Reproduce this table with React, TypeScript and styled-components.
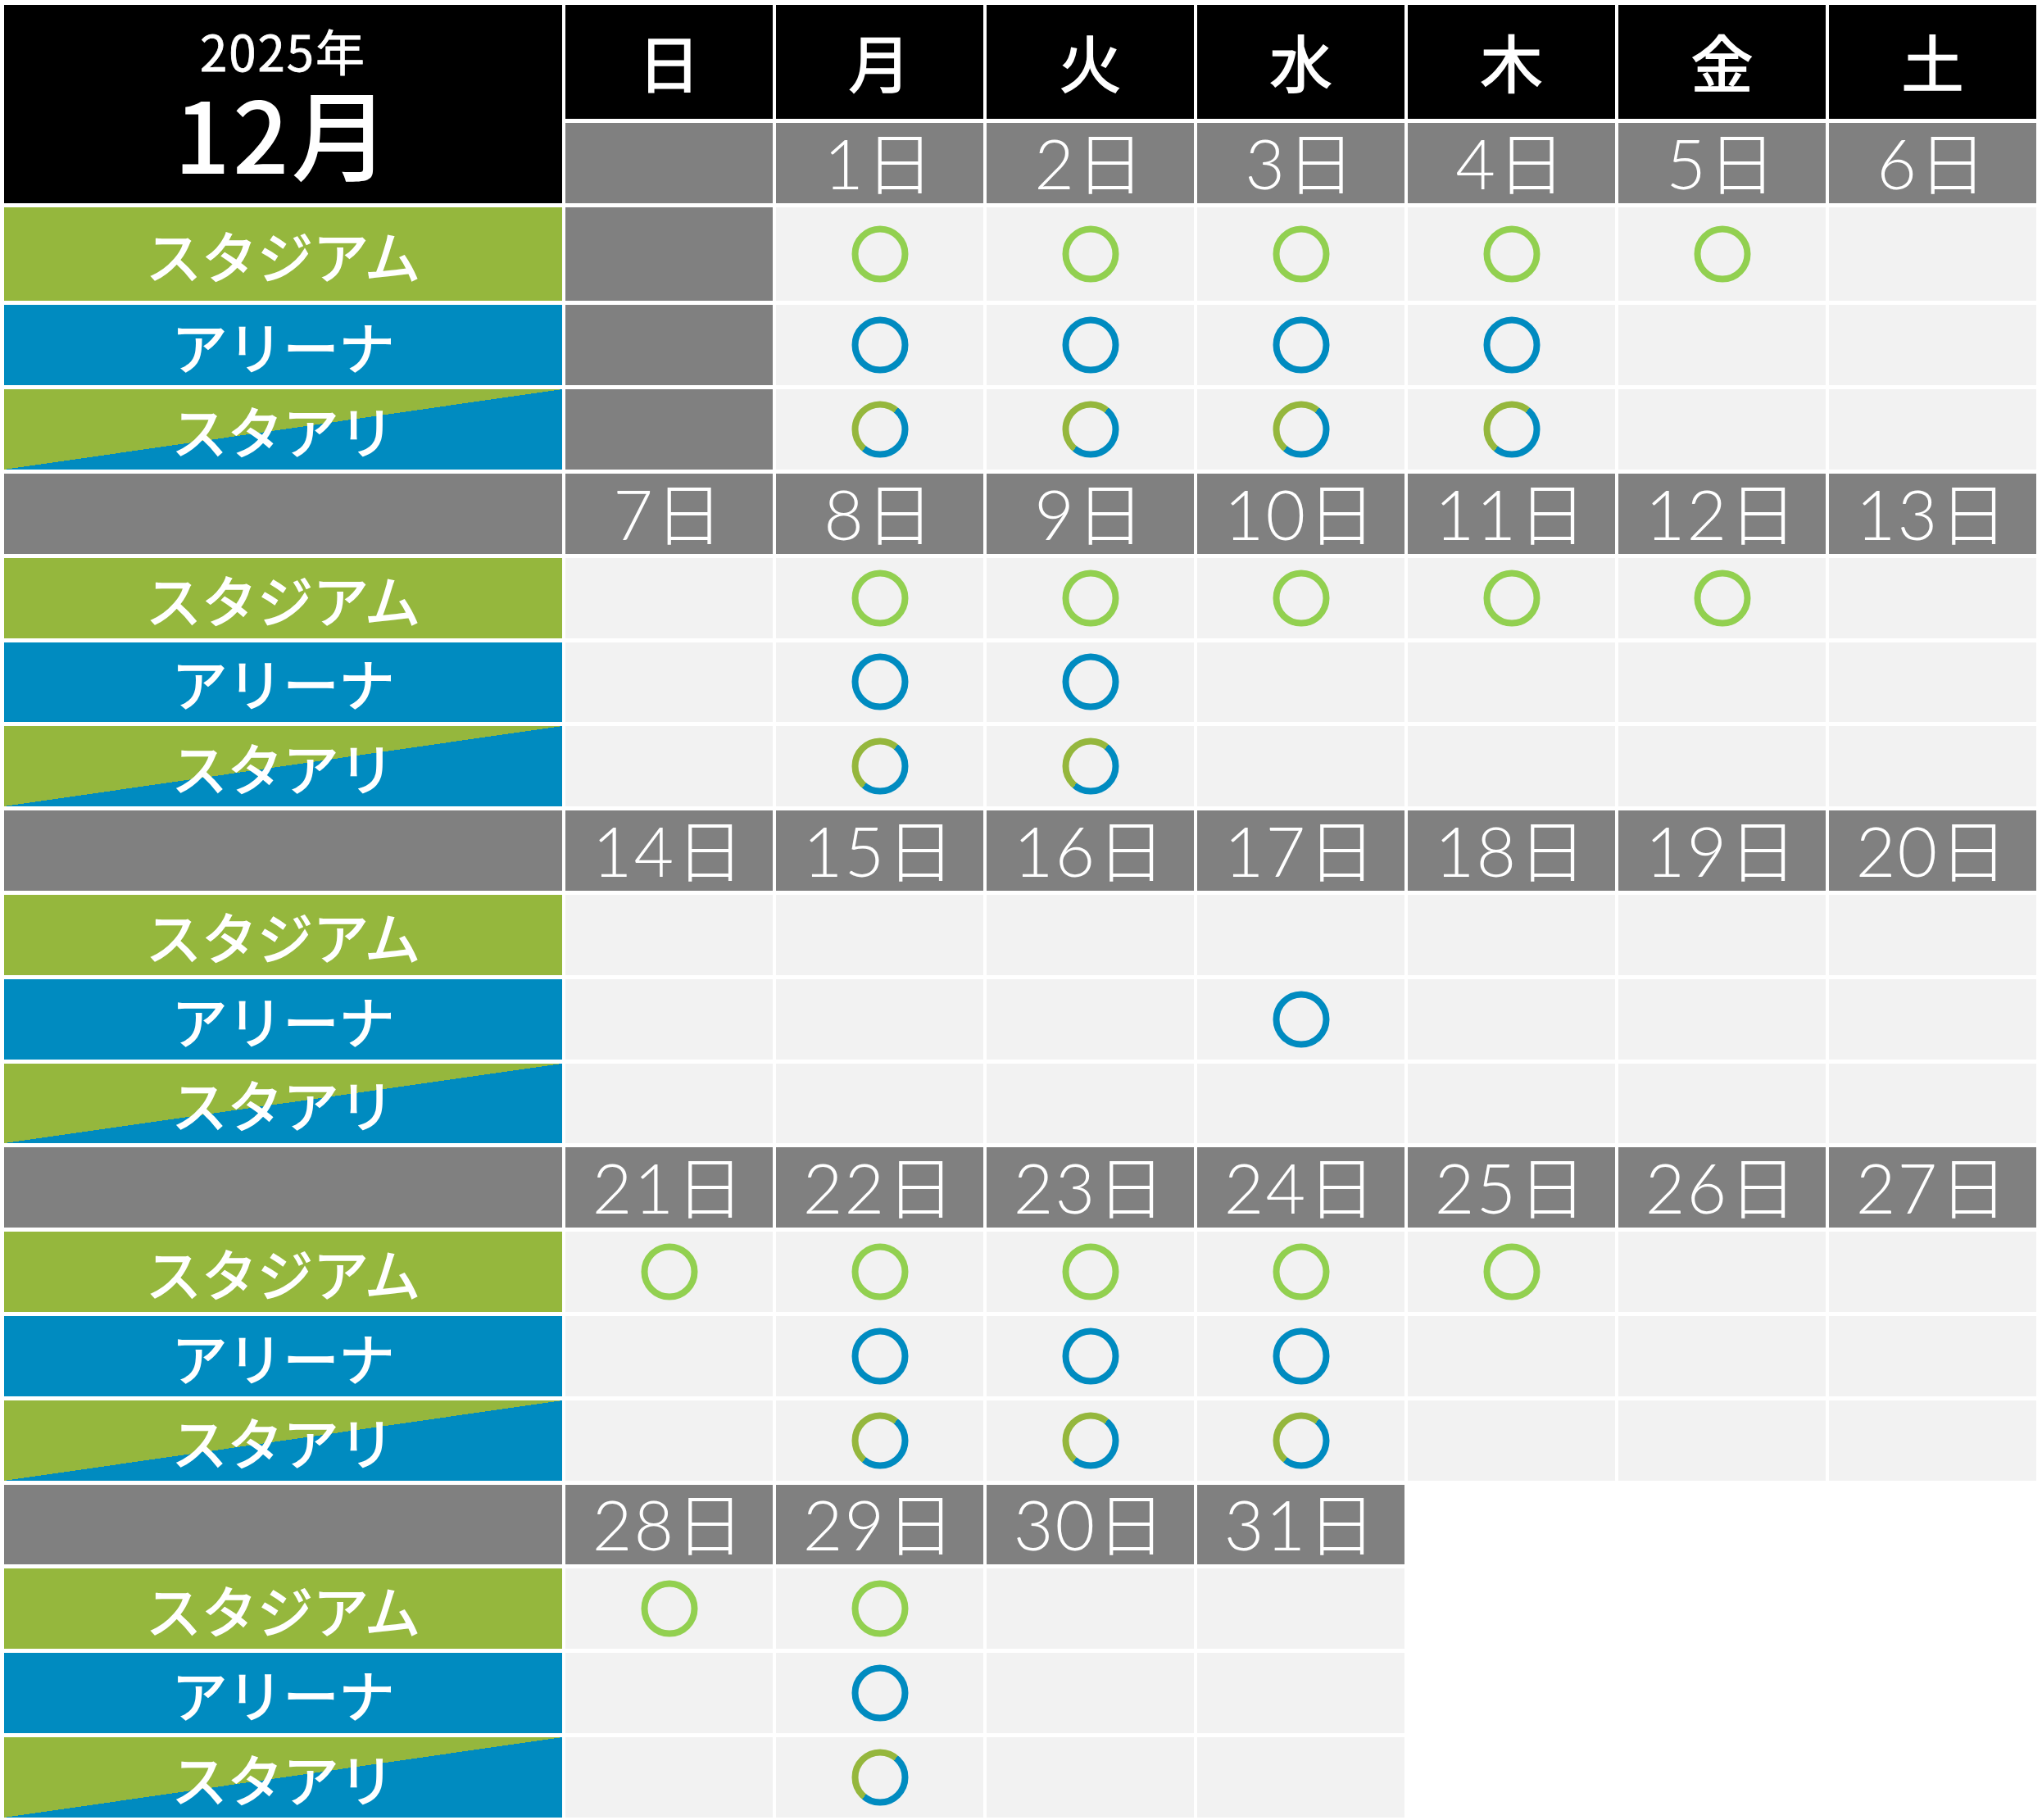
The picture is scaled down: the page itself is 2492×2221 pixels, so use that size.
import React from "react";
import styled, { createGlobalStyle } from "styled-components";

const GREEN = "#95b73d";
const LIME = "#92d050";
const BLUE = "#008bc0";
const GRAY = "#808080";
const LIGHT = "#f2f2f2";

type VenueKey = "stadium" | "arena" | "both";
type SlotKind = "pad" | "on" | "off";

const venues: { key: VenueKey; label: string }[] = [
  { key: "stadium", label: "スタジアム" },
  { key: "arena", label: "アリーナ" },
  { key: "both", label: "スタアリ" },
];

const openDays: Record<VenueKey, number[]> = {
  stadium: [1, 2, 3, 4, 5, 8, 9, 10, 11, 12, 21, 22, 23, 24, 25, 28, 29],
  arena: [1, 2, 3, 4, 8, 9, 17, 22, 23, 24, 29],
  both: [1, 2, 3, 4, 8, 9, 22, 23, 24, 29],
};

const weekdays = ["日", "月", "火", "水", "木", "金", "土"];

// 2025/12/1 is a Monday
const FIRST_OFFSET = 1;
const DAYS_IN_MONTH = 31;

function buildWeeks(): number[][] {
  const weeks: number[][] = [];
  let day = 1 - FIRST_OFFSET;
  while (day <= DAYS_IN_MONTH) {
    const week: number[] = [];
    for (let i = 0; i < 7; i++) {
      week.push(day);
      day++;
    }
    weeks.push(week);
  }
  return weeks;
}

function kindOf(day: number): SlotKind {
  if (day < 1) return "pad";
  if (day > DAYS_IN_MONTH) return "off";
  return "on";
}

const GlobalStyle = createGlobalStyle`
  html, body {
    margin: 0;
    padding: 0;
    background: #ffffff;
  }
  body {
    font-family: "Noto Sans CJK JP", "Noto Sans", sans-serif;
  }
`;

const Calendar = styled.div`
  display: grid;
  grid-template-columns: 681px repeat(7, 253px);
  grid-template-rows: 139px 98px 114px 98px 98px repeat(16, 97.8px);
  column-gap: 4px;
  row-gap: 5px;
  padding: 6px 0 0 5px;
  width: max-content;
`;

const Cell = styled.div`
  display: flex;
  align-items: center;
  justify-content: center;
  line-height: 1;
  color: #ffffff;
  white-space: nowrap;
`;

const MonthCell = styled(Cell)`
  grid-row: span 2;
  flex-direction: column;
  background: #000000;
`;

const Year = styled.span`
  font-size: 60px;
  font-weight: 400;
  letter-spacing: 2px;
  line-height: 1.1;
  -webkit-text-stroke: 0.8px #ffffff;
`;

const Month = styled.span`
  font-size: 120px;
  font-weight: 500;
  letter-spacing: 3px;
  line-height: 1.1;
`;

const DayName = styled(Cell)`
  background: #000000;
  font-size: 76px;
  font-weight: 400;
  -webkit-text-stroke: 1.6px #ffffff;
  padding-bottom: 4px;
`;

const DateCell = styled(Cell)<{ $kind: SlotKind }>`
  background: ${(p) => (p.$kind === "off" ? "transparent" : GRAY)};
  font-family: Lato, "Noto Sans CJK JP", sans-serif;
  font-size: 84px;
  font-weight: 300;
  letter-spacing: 2px;
`;

const DateSpacer = styled.div`
  background: ${GRAY};
`;

const labelBg: Record<VenueKey, string> = {
  stadium: GREEN,
  arena: BLUE,
  both: `linear-gradient(to bottom right, ${GREEN} 50%, ${BLUE} 50%)`,
};

const Label = styled(Cell)<{ $venue: VenueKey }>`
  background: ${(p) => labelBg[p.$venue]};
  font-size: 68px;
  font-weight: 400;
  -webkit-text-stroke: 1.6px #ffffff;
  padding-top: 2px;
`;

const slotBg: Record<SlotKind, string> = {
  pad: GRAY,
  on: LIGHT,
  off: "transparent",
};

const Slot = styled(Cell)<{ $kind: SlotKind }>`
  background: ${(p) => slotBg[p.$kind]};
`;

const RingSvg = styled.svg`
  display: block;
  width: 70px;
  height: 70px;
`;

function Ring({ venue, id }: { venue: VenueKey; id: string }) {
  const stroke = venue === "stadium" ? LIME : venue === "arena" ? BLUE : `url(#${id})`;
  return (
    <RingSvg viewBox="0 0 70 70">
      {venue === "both" && (
        <defs>
          <linearGradient id={id} gradientUnits="userSpaceOnUse" x1="4" y1="9.5" x2="66" y2="60.5">
            <stop offset="0.5" stopColor={GREEN} />
            <stop offset="0.5" stopColor={BLUE} />
          </linearGradient>
        </defs>
      )}
      <circle cx="35" cy="35" r="30.5" fill="none" stroke={stroke} strokeWidth="8" />
    </RingSvg>
  );
}

export default function App() {
  const weeks = buildWeeks();

  return (
    <>
      <GlobalStyle />
      <Calendar>
        <MonthCell>
          <Year>2025年</Year>
          <Month>12月</Month>
        </MonthCell>
        {weekdays.map((w) => (
          <DayName key={w}>{w}</DayName>
        ))}

        {weeks.map((week, wi) => (
          <React.Fragment key={wi}>
            {wi > 0 && <DateSpacer />}
            {week.map((day, di) => {
              const kind = kindOf(day);
              return (
                <DateCell key={`d-${di}`} $kind={kind}>
                  {kind === "on" ? `${day}日` : ""}
                </DateCell>
              );
            })}

            {venues.map((v) => (
              <React.Fragment key={v.key}>
                <Label $venue={v.key}>{v.label}</Label>
                {week.map((day, di) => {
                  const kind = kindOf(day);
                  const open = kind === "on" && openDays[v.key].includes(day);
                  return (
                    <Slot key={`${v.key}-${di}`} $kind={kind}>
                      {open && <Ring venue={v.key} id={`mix-${wi}-${di}`} />}
                    </Slot>
                  );
                })}
              </React.Fragment>
            ))}
          </React.Fragment>
        ))}
      </Calendar>
    </>
  );
}
